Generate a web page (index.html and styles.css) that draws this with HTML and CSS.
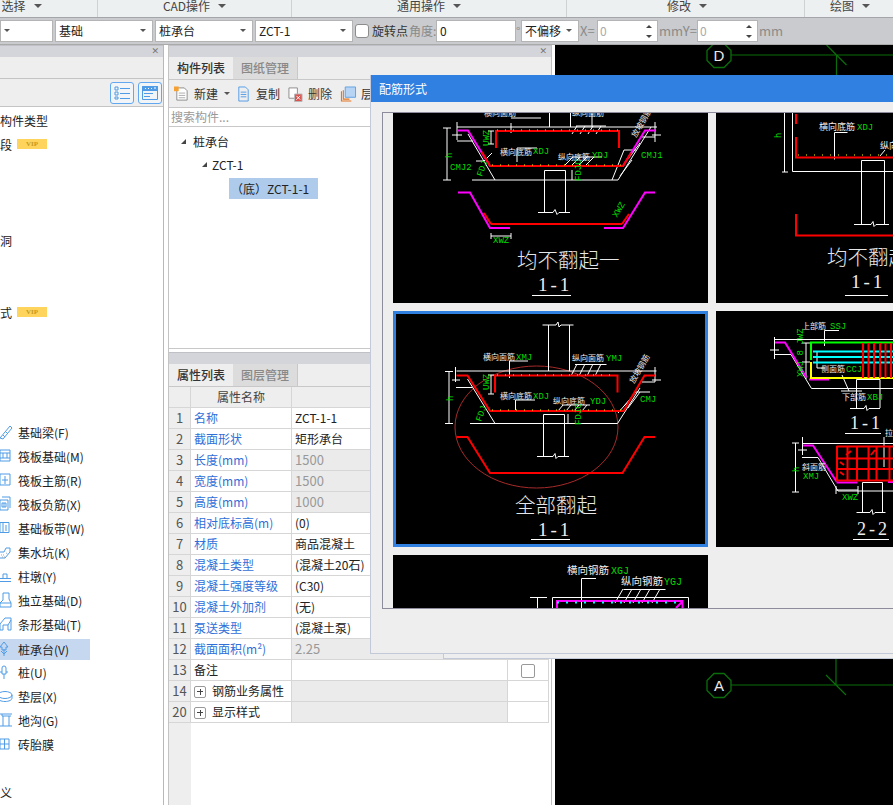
FILE: index.html
```html
<!DOCTYPE html>
<html lang="zh">
<head>
<meta charset="utf-8">
<title>配筋形式</title>
<link rel="stylesheet" href="styles.css">
</head>
<body>
<div class="app">
  <div class="menubar">
    <div class="menu m1"><span>选择</span><i class="caret"></i></div>
    <div class="menu m2"><span>CAD操作</span><i class="caret"></i></div>
    <div class="menu m3"><span>通用操作</span><i class="caret"></i></div>
    <div class="menu m4"><span>修改</span><i class="caret"></i></div>
    <div class="menu m5"><span>绘图</span><i class="caret"></i></div>
  </div>
  <div class="optbar">
    <div class="combo c0"><i class="caret small"></i></div>
    <div class="combo c1"><span>基础</span><i class="caret small"></i></div>
    <div class="combo c1"><span>桩承台</span><i class="caret small"></i></div>
    <div class="combo c1"><span>ZCT-1</span><i class="caret small"></i></div>
    <div class="check"></div>
    <span class="lbl dark">旋转点</span>
    <span class="lbl w-ang">角度:</span>
    <div class="combo c-ang"><span>0</span></div>
    <span class="lbl deg">°</span>
    <div class="combo c-off"><span>不偏移</span><i class="caret small"></i></div>
    <span class="lbl w-x">X=</span>
    <div class="combo c-spin"><span class="mut">0</span><i class="spin"></i></div>
    <span class="lbl w-y">mmY=</span>
    <div class="combo c-spin"><span class="mut">0</span><i class="spin"></i></div>
    <span class="lbl w-mm">mm</span>
  </div>
  <div class="main">
    <aside class="left">
      <div class="strip"><span class="close">✕</span></div>
      <div class="left-tabs"></div>
      <div class="left-tools">
        <div class="tbtn"><svg width="16" height="14" viewBox="0 0 16 14"><path class="ib" d="M1 1h3v3H1zM1 6h3v3H1zM1 11h3v2H1zM6 2.500h10M6 7.500h10M6 12.500h10"/></svg></div>
        <div class="tbtn"><svg width="16" height="14" viewBox="0 0 16 14"><path class="ib" d="M.5.500h15v13H.5zM2 7.500h9M2 10.500h6"/><path class="ibf" d="M.5.500h15v4H.5z"/><path class="iw" d="M3 2.500h1M6 2.500h1M9 2.500h1M12 2h2"/></svg></div>
      </div>
      <div class="comp-list">
        <div class="crow"><span>构件类型</span></div>
        <div class="crow"><span>段</span><b class="vip">VIP</b></div>
        <div class="crow"></div><div class="crow"></div><div class="crow"></div>
        <div class="crow"><span>洞</span></div>
        <div class="crow"></div><div class="crow"></div>
        <div class="crow"><span>式</span><b class="vip">VIP</b></div>
        <div class="crow"></div><div class="crow"></div><div class="crow"></div><div class="crow"></div>
        <div class="crow it"><svg class="ic" viewBox="0 0 14 16"><path class="ib" d="M0 14L10 2l2 2L3 15zM3 11l2 2M6 8l2 2"/></svg><span>基础梁(F)</span></div>
        <div class="crow it"><svg class="ic" viewBox="0 0 14 16"><path class="ib" d="M0 2h10v11H0zM3 5h4v5H3zM0 5h3M7 5h3M0 10h3M7 10h3"/></svg><span>筏板基础(M)</span></div>
        <div class="crow it"><svg class="ic" viewBox="0 0 14 16"><path class="ib" d="M0 2h10v11H0zM5 4v8M2 8h6"/></svg><span>筏板主筋(R)</span></div>
        <div class="crow it"><svg class="ic" viewBox="0 0 14 16"><path class="ib" d="M2 1h8v11M0 4h8v10H0zM2 7h4v4H2zM4 7v4"/></svg><span>筏板负筋(X)</span></div>
        <div class="crow it"><svg class="ic" viewBox="0 0 14 16"><path class="ib" d="M0 2.500h9v10H0zM3 3v9M6 5v6"/></svg><span>基础板带(W)</span></div>
        <div class="crow it"><svg class="ic" viewBox="0 0 14 16"><path class="ib" d="M0 8h4l2-4h4M0 14h5l5-6V4"/><path class="id" d="M1 11h4M2 13h3M6 9l2 1"/></svg><span>集水坑(K)</span></div>
        <div class="crow it"><svg class="ic" viewBox="0 0 14 16"><path class="ib" d="M0 13.500h11M0 10.500h11M3 10V6h4v4"/></svg><span>柱墩(Y)</span></div>
        <div class="crow it"><svg class="ic" viewBox="0 0 14 16"><path class="ib" d="M3 1h6v6M3 1v7L0 11v4h11v-4L9 7M0 11h11"/></svg><span>独立基础(D)</span></div>
        <div class="crow it"><svg class="ic" viewBox="0 0 14 16"><path class="ib" d="M0 8l5-6h6v12H8V9H3v5H0zM8 9l3-5"/></svg><span>条形基础(T)</span></div>
        <div class="crow it sel"><div class="hl"><svg class="ic" viewBox="0 0 14 16"><path class="ib" d="M4 1L0 6h2v3h4V6h2zM4 8v7M1 10l3 3 3-3"/></svg><span>桩承台(V)</span></div></div>
        <div class="crow it"><svg class="ic" viewBox="0 0 14 16"><path class="ib" d="M2 4a2 2 0 0 1 4 0v6H2zM0 8h2M6 8h2M4 10v5"/></svg><span>桩(U)</span></div>
        <div class="crow it"><svg class="ic" viewBox="0 0 14 16"><ellipse class="ib" cx="5" cy="7" rx="7" ry="3.500"/><path class="ib" d="M-2 7v3c0 2 3 3.500 7 3.500s7-1.500 7-3.500V7"/></svg><span>垫层(X)</span></div>
        <div class="crow it"><svg class="ic" viewBox="0 0 14 16"><path class="ib" d="M0 2h12M2 2v2h9M0 14h12M3 4v10M9 4v10"/></svg><span>地沟(G)</span></div>
        <div class="crow it"><svg class="ic" viewBox="0 0 14 16"><path class="ib" d="M0 3h9v10H0zM4.500 3v10M0 8h9"/></svg><span>砖胎膜</span></div>
        <div class="crow"></div>
        <div class="crow"><span>义</span></div>
      </div>
    </aside>
    <section class="mid">
      <div class="strip"><span class="close">✕</span></div>
      <div class="tabs"><div class="tab on">构件列表</div><div class="tab">图纸管理</div></div>
      <div class="tools">
        <svg class="ti" viewBox="0 0 16 16"><path class="pg" d="M3 1.500h8l3 3v10H3z"/><path class="pl" d="M5 7h7M5 9.500h7M5 12h7"/><path class="sp" d="M0 0h5v5H0z"/></svg><span class="tt">新建</span><i class="caret small tc"></i>
        <svg class="ti t2" viewBox="0 0 16 16"><path class="ib" d="M3 .500h7l3 3v12H3zM5 6h6M5 8.500h6M5 11h6"/></svg><span class="tt">复制</span>
        <svg class="ti t3" viewBox="0 0 16 16"><path class="pg" d="M1 1.500h9v11H1z"/><path class="xb" d="M7 8h8v8H7z"/><path class="xl" d="M9 10l4 4M13 10l-4 4"/></svg><span class="tt">删除</span>
        <svg class="ti t4" viewBox="0 0 16 16"><path class="ol" d="M.5 5v10.500H11M2.500 4v9.500H9"/><path class="bx" d="M4.500.500h11v11h-11z"/></svg><span class="tt">层间复制</span>
      </div>
      <div class="search">搜索构件...</div>
      <div class="tree">
        <div class="node n1"><i class="tri"></i><span>桩承台</span></div>
        <div class="node n2"><i class="tri"></i><span>ZCT-1</span></div>
        <div class="node n3"><span class="nsel">（底）ZCT-1-1</span></div>
      </div>
      <div class="sep"></div>
      <div class="strip"><span class="close"></span></div>
      <div class="tabs"><div class="tab on">属性列表</div><div class="tab">图层管理</div></div>
      <div class="table">
        <div class="c h n"></div><div class="c h ctr">属性名称</div><div class="c h span2"></div>
        <div class="c n">1</div><div class="c k">名称</div><div class="c span2">ZCT-1-1</div>
        <div class="c n">2</div><div class="c k">截面形状</div><div class="c span2">矩形承台</div>
        <div class="c n">3</div><div class="c k">长度(mm)</div><div class="c span2 ro">1500</div>
        <div class="c n">4</div><div class="c k">宽度(mm)</div><div class="c span2 ro">1500</div>
        <div class="c n">5</div><div class="c k">高度(mm)</div><div class="c span2 ro">1000</div>
        <div class="c n">6</div><div class="c k">相对底标高(m)</div><div class="c span2">(0)</div>
        <div class="c n">7</div><div class="c k">材质</div><div class="c span2">商品混凝土</div>
        <div class="c n">8</div><div class="c k">混凝土类型</div><div class="c span2">(混凝土20石)</div>
        <div class="c n">9</div><div class="c k">混凝土强度等级</div><div class="c span2">(C30)</div>
        <div class="c n">10</div><div class="c k">混凝土外加剂</div><div class="c span2">(无)</div>
        <div class="c n">11</div><div class="c k">泵送类型</div><div class="c span2">(混凝土泵)</div>
        <div class="c n">12</div><div class="c k">截面面积(m²)</div><div class="c span2 ro">2.25</div>
        <div class="c n">13</div><div class="c lab">备注</div><div class="c"></div><div class="c ctr"><i class="cb"></i></div>
        <div class="c n">14</div><div class="c lab"><i class="plus"></i>钢筋业务属性</div><div class="c gr"></div><div class="c"></div>
        <div class="c n">20</div><div class="c lab"><i class="plus"></i>显示样式</div><div class="c gr"></div><div class="c"></div>
      </div>
      <div class="filler"></div>
    </section>
    <div class="cad">
      <svg class="cadsvg" viewBox="555 45 338 760">
        <path class="gl" d="M731 55H893M826.500 45l20 20M836.500 55V110M731 685H893M826 675l20 20M836 640V685"/>
        <path class="gl2" d="M714 43.500h10l7 7v10l-7 7h-10l-7-7v-10zM714 673.500h10l7 7v10l-7 7h-10l-7-7v-10z"/>
        <text class="axis" x="719" y="60.500">D</text>
        <text class="axis" x="719" y="690.500">A</text>
      </svg>
    </div>
  </div>

  <div class="backdlg"></div>
  <div class="dialog">
    <div class="dtitle">配筋形式</div>
    <div class="dbody">
      <div class="gallery">
        <div class="card h1">
          <svg class="dw" viewBox="393 113 315 190">
            <path class="w" d="M457 127H657M549.500 113v14M570.500 113v14M447 128v52M443 128h8M443 180h8M457 122v18M452 135h10M457 141h16M468 134l27 46M472 180H618M618 180l33-53M655 122v20M652 135h9M642 137h13M544.500 213V170.500H565.500V213M538 212.500H553l2-3 2 5 2-2H570M511 123v10M511 118h30M592 114v13M491 131v13M488 131h6M488 144h6M476 161h8l8-8M517 148v14M517 148h20M572 170v10"/>
            <path class="w" d="M572 157h30M565 165l8-8M572 165l8-8M579 165l8-8M586 165l8-8M576 126h30M572 134l5-8M580 134l5-8M588 134l5-8M596 134l5-8M636 150h-12l-12 30M632 160l-12 16M640 143l-12 16"/>
            <path class="m" d="M458 130.500H468L490 166H510M604 166H623L645 130.500H655M458 192.500H470L490 228H510M604 228H623L645 192.500H655"/>
            <path class="r" d="M496 148V131H619V148M490 166H623M482 152l8 14M623 166l8-13M491 224H622M484 213l7 11M622 224l7-10"/>
            <path class="y" d="M497 130H618M492 165H622"/>
            <path class="w" d="M491 233v6M511 233v6M491 236h20"/>
            <text class="t" x="500" y="155">横向底筋</text><text class="g" x="533" y="154">XDJ</text>
            <text class="t" x="484" y="116">横向面筋</text><text class="t" x="572" y="116">纵向面筋</text><text class="t" x="558" y="160">纵向底筋</text><text class="g" x="592" y="158">YDJ</text>
            <text class="g" x="450" y="170">CMJ2</text><text class="g" x="641" y="158">CMJ1</text><text class="g" x="493" y="243">XWZ</text>
            <text class="g" transform="translate(452 158) rotate(-90)">h</text>
            <text class="g" transform="translate(489 146) rotate(-90)">UWZ</text>
            <text class="g" transform="translate(482 177) rotate(-70)">FDJ</text>
            <text class="g" transform="translate(581 181) rotate(-90)">FDJC</text>
            <text class="g" transform="translate(617 218) rotate(-60)">XWZ</text>
            <text class="t" transform="translate(636 138) rotate(-60)">放坡钢筋</text>
            <text class="big" x="517" y="268">均不翻起一</text>
            <text class="num" x="538" y="291">1-1</text>
            <path class="w" d="M532 295.500H571"/>
          </svg>
        </div>
        <div class="card h1">
          <svg class="dw" viewBox="716 113 315 190">
            <path class="w" d="M784.500 113v59M782 172h6M792.500 113v58.500H893M861.500 224V160.500H884.500V224M854 224.500H871l2-3 1 5 2-2H889M834.500 159.500V132.500H847.500M880 156l5-6"/>
            <path class="r" d="M796 114v10M796 137V157.500H893M796 214V235.500H893"/>
            <path class="y" d="M798 155H893"/>
            <text class="t t9" x="819" y="130">横向底筋</text><text class="g" x="857" y="130">XDJ</text><text class="t t9" x="880" y="149">纵向底筋</text>
            <text class="g" transform="translate(781 138) rotate(-90)">h</text>
            <text class="big" x="827" y="265">均不翻起一</text>
            <text class="num" x="851" y="288">1-1</text>
            <path class="w" d="M845 295.500H888"/>
          </svg>
        </div>
        <div class="card h2 selc">
          <svg class="dw" viewBox="393 311 315 236">
            <ellipse class="el" cx="536.500" cy="427" rx="81.500" ry="61"/>
            <path class="w" d="M548.500 371V325M569.500 371V325M542.500 325H556l2-3 1 5 2-2H573.500M456.500 371H656.500M455.500 367v15M452 380h8M449 371.500v52M445 371.500h8M445 423.500h8M456 387.500h16.500M467.500 379L495 423.500M470 423.500H617.500M617.500 423.500L640 388M491 375v19M488 375h6M488 394h6M543.500 456V414.500H564.500V456M537 456.500H553l2-3 1 5 2-2H569M509.500 361v17M509.500 361H528M515.500 400v12M515.500 400H535M655 367v15M652 380h9M642 382h13M568 414v9"/>
            <path class="w" d="M575 364.500H606.500M571 376l6-12M579 376l6-12M587 376l6-12M595 376l6-12M562 405h28M558 411l5-6M566 411l5-6M574 411l5-6M582 411l5-6M650 392h-14l-18 21M640 392l-12 16M632 398l-8 8"/>
            <path class="r" d="M456.500 375.500H467.500L490 411H623.500L644.500 375.500H655M495 392.500V375.500H617.500V392.500M456.500 437H467.500L490 473H622.500L644.500 437H655"/>
            <path class="y" d="M497 375H617M492 410H622"/>
            <text class="t" x="483" y="360">横向面筋</text><text class="g" x="516" y="360">XMJ</text>
            <text class="t" x="572" y="361">纵向面筋</text><text class="g" x="606" y="361">YMJ</text>
            <text class="t" x="500" y="399">横向底筋</text><text class="g" x="533" y="399">XDJ</text>
            <text class="t" x="553" y="404">纵向底筋</text><text class="g" x="590" y="404">YDJ</text>
            <text class="g" x="640" y="402">CMJ</text>
            <text class="g" transform="translate(453 401) rotate(-90)">h</text>
            <text class="g" transform="translate(489 390) rotate(-90)">UWZ</text>
            <text class="g" transform="translate(481 422) rotate(-70)">FDJ</text>
            <text class="g" transform="translate(581 425) rotate(-90)">FDJC</text>
            <text class="t" transform="translate(634 384) rotate(-60)">放坡钢筋</text>
            <text class="big" x="515" y="513">全部翻起</text>
            <text class="num" x="538" y="536">1-1</text>
            <path class="w" d="M531 539.500H570"/>
          </svg>
        </div>
        <div class="card h2">
          <svg class="dw" viewBox="716 311 315 236">
            <path class="w" d="M774.500 337v22M770 350h9M774.500 339.500H893M774 354.500h17M791 354.500L811.500 388.500H893M806 343v36M802 343h8M802 362h8M824.500 346V330.500H839M856.500 408V379.500H880V408M850 408.500H864l2-3 1 5 2-2H880M842 375l7 16M841 391h21M817 352v16M817 368h8"/>
            <path class="m" d="M775 342.500H785L806.500 377.500M809 379.500H829"/>
            <path class="bg" d="M811 360V342.500H893"/>
            <path class="yl" d="M811 362V378H893"/>
            <path class="cy" d="M813 351.500H893M813 357H893M813 362.500H893"/>
            <path class="r" d="M863 343v35M868.500 343v35M874 343v35M880 343v35M885.500 343v35M891 343v35"/>
            <text class="t" x="802" y="329">上部筋</text><text class="g" x="830" y="329">SSJ</text>
            <text class="t" x="821" y="372">侧面筋</text><text class="g" x="846" y="372">CCJ</text>
            <text class="t" x="842" y="400">下部筋</text><text class="g" x="867" y="400">XBJ</text>
            <text class="g" transform="translate(803 377) rotate(-90)">XWJ 8 JWZ</text>
            <text class="num sm" x="850" y="429">1-1</text>
            <path class="w" d="M845 433.500H881"/>
            <path class="w" d="M795.500 443v49M792 443h7M792 492h7M802.500 437v18M798 450h9M802 443.500H893M802 457.500h16M818 457.500L838 491H893M836 486v8M858 486v8M836 490h22M862.500 512V482.500H882.500V512M856.500 512.500H870l2-3 1 5 2-2H885.500M884 437v30"/>
            <path class="m" d="M803 445.500H813L836.500 481.500M836.500 482.500H857.500M888 482h5"/>
            <path class="r" d="M836.500 446.500H893M836.500 458.500H893M836.500 469H893M836.500 480.500H893M837 446v35M847.500 446v35M857 446v35M868.500 446v35M876.500 446v35M889.500 446v35M851 451l-5 4M875 450l-4 5M840 462l4 3M840 472l4 3"/>
            <text class="t" x="802" y="470">斜面筋</text><text class="g" x="803" y="479">XMJ</text>
            <text class="g" x="842" y="500">XWZ</text><text class="t" x="885" y="436">拉筋</text>
            <text class="g" transform="translate(799 472) rotate(-90)">h</text>
            <text class="num sm" x="857" y="535">2-2</text>
            <path class="w" d="M853 539.500H889"/>
          </svg>
        </div>
        <div class="card h3">
          <svg class="dw" viewBox="393 555 315 53">
            <path class="w" d="M530 597.500H547M537.500 597v11M552.500 608V597.500H688.500V608M581.500 608V578.500H596M623.500 589.500H665.500M615 603l8-14M624 603l8-14M633 603l8-14M642 603l8-14M652 603l8-14"/>
            <path class="m" d="M557 608V601H682.500V608M676 608l6-6"/>
            <path class="cd" d="M557 602.500H682"/>
            <text class="t t10" x="567" y="574">横向钢筋</text><text class="g g10" x="611" y="574">XGJ</text>
            <text class="t t10" x="621" y="585">纵向钢筋</text><text class="g g10" x="664" y="585">YGJ</text>
          </svg>
        </div>
      </div>
    </div>
  </div>
</div>
</body>
</html>
```

FILE: styles.css
```css
* { box-sizing: border-box; }
html, body { margin: 0; padding: 0; background: #fff; }
body { font-family: "Noto Sans CJK SC", "Liberation Sans", sans-serif; font-size: 12px; color: #222; }
.app { position: relative; width: 893px; height: 805px; overflow: hidden; display: flex; flex-direction: column; }

.menubar { height: 18px; flex: none; display: flex; background: #edf0f0; border-bottom: 1px solid #a3a5a8; overflow: hidden; }
.menu { height: 17px; display: flex; align-items: center; justify-content: center; gap: 8px; border-right: 1px solid #cfd2d2; color: #444; font-size: 12px; line-height: 10px; }
.menu span { position: relative; top: -3px; }
.menu .caret { position: relative; top: -3px; }
.m1 { width: 98px; padding-right: 54px; }
.m2 { width: 194px; }
.m3 { width: 275px; }
.m4 { width: 238px; padding-left: 3px; }
.m5 { width: 88px; padding-left: 2px; border-right: 0; }
.caret { display: block; width: 0; height: 0; border-left: 4px solid transparent; border-right: 4px solid transparent; border-top: 4px solid #555; flex: none; }
.caret.small { border-left-width: 3px; border-right-width: 3px; border-top-width: 3px; }

.optbar { height: 27px; flex: none; background: #c9cbce; border-bottom: 1px solid #aaa; display: flex; align-items: center; padding-bottom: 3px; padding-top: 2px; }
.combo { height: 22px; background: #fff; border: 1px solid #b4b4b4; display: flex; align-items: center; justify-content: space-between; padding: 0 6px 0 3px; margin-right: 2px; font-size: 12px; color: #222; flex: none; }
.c0 { width: 53px; }
.c1 { width: 98px; }
.c-ang { width: 80px; margin-right: 0; }
.c-off { width: 58px; margin-right: 0; }
.c-spin { width: 61px; margin-right: 0; padding-left: 2px; padding-right: 5px; }
.mut { color: #aaa; }
.spin { display: block; width: 0; height: 14px; position: relative; margin-right: 3px; }
.spin::before, .spin::after { content: ""; position: absolute; left: -3px; border-left: 3px solid transparent; border-right: 3px solid transparent; }
.spin::before { top: 1px; border-bottom: 3px solid #444; }
.spin::after { bottom: 0; border-top: 3px solid #444; }
.check { width: 14px; height: 14px; margin-right: 3px; background: #fff; border: 1px solid #8c8c8c; border-radius: 3px; flex: none; }
.lbl { color: #8a8a8a; font-size: 12px; flex: none; white-space: nowrap; }
.dark { color: #333; width: 37px; }
.w-ang { width: 27px; }
.deg { width: 5px; }
.w-x { width: 18px; padding-left: 1px; font-size: 13px; }
.w-y { width: 39px; padding-left: 1px; font-size: 13px; }
.w-mm { margin-left: 1px; font-size: 13px; }

.main { flex: 1; display: flex; min-height: 0; }
.strip { height: 12px; flex: none; background: #d3d5da; border-top: 1px solid #bfc1c6; position: relative; }
.close { position: absolute; right: 4px; top: -1px; font-size: 9px; line-height: 12px; color: #777; font-family: "DejaVu Sans", sans-serif; font-weight: bold; }

.left { width: 164px; flex: none; border-right: 1px solid #b8b8b8; margin-right: 4px; display: flex; flex-direction: column; }
.left-tabs { height: 22px; flex: none; background: #eee; border-bottom: 1px solid #c4c4c4; }
.left-tools { height: 28px; flex: none; background: #eee; border-bottom: 1px solid #c4c4c4; display: flex; justify-content: flex-end; gap: 4px; padding: 3px 1px 0 0; }
.tbtn { width: 24px; height: 22px; border: 1px solid #62a8f0; border-radius: 3px; background: #f2f5f8; display: flex; align-items: center; justify-content: center; }
.ib { fill: none; stroke: #4f9be6; stroke-width: 1; }
.ibf { fill: #4f9be6; stroke: #4f9be6; }
.iw { fill: none; stroke: #fff; stroke-width: 1; }
.id { fill: none; stroke: #9ab; stroke-width: 1; stroke-dasharray: 1 1; }
.comp-list { flex: 1; padding-top: 1px; }
.crow { height: 24px; display: flex; align-items: center; white-space: nowrap; color: #222; }
.vip { margin-left: 5px; width: 30px; height: 10px; background: #ffd45c; color: #c49a20; font: bold 7px/10px "Liberation Serif", serif; text-align: center; }
.it { padding-left: 18px; position: relative; }
.ic { position: absolute; left: 0; top: 4px; width: 14px; height: 16px; overflow: visible; }
.sel { padding-left: 0; }
.hl { width: 90px; height: 21px; background: #c6d8f0; padding-left: 18px; display: flex; align-items: center; position: relative; top: 1px; }
.hl .ic { top: 2px; }

.mid { width: 384px; flex: none; border-left: 1px solid #c4c4c4; border-right: 1px solid #c0c0c0; display: flex; flex-direction: column; margin-right: 3px; }
.tabs { height: 23px; flex: none; display: flex; background: #eee; border-bottom: 1px solid #c8c8c8; }
.tab { width: 65px; height: 22px; line-height: 22px; text-align: center; color: #888; background: #dcdcdc; border-right: 1px solid #c8c8c8; font-weight: 500; }
.tab.on { width: 64px; background: #eee; color: #333; border-right: 0; }
.tools { height: 28px; flex: none; background: #eee; border-bottom: 1px solid #c8c8c8; display: flex; align-items: center; padding-left: 5px; white-space: nowrap; overflow: hidden; }
.ti { width: 15px; height: 16px; flex: none; overflow: visible; }
.tt { margin-left: 5px; color: #333; }
.tc { margin-left: 6px; }
.t2 { margin-left: 6px; }
.t3 { margin-left: 8px; }
.t4 { margin-left: 9px; }
.pg { fill: #fff; stroke: #8a8a8a; }
.pl { stroke: #aaa; fill: none; }
.sp { fill: #f5a030; }
.xb { fill: #d9534f; stroke: #b8b8b8; }
.xl { stroke: #fff; fill: none; }
.ol { fill: none; stroke: #e8741f; stroke-width: 1.2; }
.bx { fill: #b8d4f4; stroke: #5f9fe0; }
.search { height: 19px; flex: none; background: #fff; border-bottom: 1px solid #c8c8c8; color: #999; font-size: 12px; line-height: 17px; padding-left: 2px; }
.tree { height: 222px; flex: none; padding-top: 2px; border-bottom: 1px solid #c8c8c8; }
.node { height: 24px; display: flex; align-items: center; color: #222; }
.n2 { padding-left: 33px; margin-top: -1px; }
.n3 { padding-left: 60px; }
.tri { display: block; width: 0; height: 0; border-left: 5px solid transparent; border-bottom: 5px solid #444; margin-right: 5px; }
.n1 { padding-left: 12px; }
.n1 .tri { margin-right: 7px; }
.nsel { display: block; width: 89px; height: 21px; line-height: 21px; background: #aecbeb; white-space: nowrap; padding-left: 2px; }
.sep { height: 3px; flex: none; background: #fff; }

.table { display: grid; grid-template-columns: 22px 101px 216px 41px; grid-auto-rows: 21px; flex: none; width: 380px; }
.c { border-right: 1px solid #d6d6d6; border-bottom: 1px solid #d6d6d6; padding-left: 4px; line-height: 20px; white-space: nowrap; color: #222; background: #fff; }
.h { background: #eee; color: #444; }
.n { background: #eee; color: #555; text-align: center; padding-left: 0; font-size: 13px; }
.span2 { grid-column: span 2; padding-left: 3px; }
.ctr { text-align: center; padding-left: 0; }
.k { color: #2f6fd8; padding-left: 3px; }
.lab { padding-left: 3px; }
.ro { background: #ebebeb; color: #999; font-size: 13px; }
.gr { background: #ebebeb; }
.cb { display: inline-block; width: 14px; height: 14px; border: 1px solid #999; border-radius: 2px; vertical-align: middle; margin-top: -2px; }
.plus { display: inline-block; width: 12px; height: 12px; margin-right: 6px; border: 1px solid #999; border-radius: 2px; vertical-align: middle; margin-top: -2px; background: linear-gradient(#444, #444) center / 6px 1px no-repeat, linear-gradient(#444, #444) center / 1px 6px no-repeat; }
.filler { flex: 1; width: 22px; background: #eee; }

.cad { flex: 1; background: #000; position: relative; min-width: 0; }
.cadsvg { display: block; width: 338px; height: 760px; }
.gl { fill: none; stroke: #0a6e0a; stroke-width: 1.2; }
.gl2 { fill: none; stroke: #0a6e0a; stroke-width: 1.3; }
.axis { fill: #e8e8e8; font: 15px "Liberation Sans", sans-serif; text-anchor: middle; }

.backdlg { position: absolute; left: 443px; top: 640px; width: 450px; height: 19px; background: #eee; border-bottom: 1px solid #c3c9d8; border-left: 1px solid #c3c9d8; }
.dialog { position: absolute; left: 370px; top: 75px; width: 540px; height: 579px; background: #eee; border-left: 1px solid #c3c9d8; border-bottom: 1px solid #c3c9d8; display: flex; flex-direction: column; }
.dtitle { height: 27px; flex: none; background: #2f80e0; color: #fff; line-height: 27px; padding-left: 8px; font-size: 12px; }
.dbody { flex: 1; padding: 10px 0 0 11px; }
.gallery { height: 497px; background: #eee; border-top: 1px solid #8c8c9c; border-left: 1px solid #8c8c9c; border-bottom: 1px solid #8c8c9c; padding-left: 10px; overflow: hidden; display: grid; grid-template-columns: 315px 315px; grid-template-rows: 190px 236px 53px; gap: 8px; }
.card { background: #000; overflow: hidden; }
.selc { position: relative; }
.selc::after { content: ""; position: absolute; inset: 0; border: 3px solid #2f80e0; }
.dw { display: block; width: 315px; height: 100%; }
.w { fill: none; stroke: #fff; stroke-width: 1; }
.r { fill: none; stroke: #f00; stroke-width: 2; }
.m { fill: none; stroke: #f0f; stroke-width: 2; }
.bg { fill: none; stroke: #0f0; stroke-width: 2; }
.yl { fill: none; stroke: #ff0; stroke-width: 2; }
.cy { fill: none; stroke: #0ff; stroke-width: 2; }
.y { fill: none; stroke: #ff0; stroke-width: 1; stroke-dasharray: 1 7; }
.cd { fill: none; stroke: #0ff; stroke-width: 2; stroke-dasharray: 2 7; }
.el { fill: none; stroke: #a82a2a; stroke-width: 1; }
.t { fill: #eee; font-size: 8px; }
.t9 { font-size: 9px; }
.t10 { font-size: 10.500px; }
.g { fill: #0d0; font: 9px "Liberation Mono", monospace; }
.g10 { font-size: 10px; }
.big { fill: #e6e6e6; font-size: 20.500px; font-weight: 300; }
.num { fill: #eee; font: 19px "Liberation Serif", serif; letter-spacing: 3px; }
.num.sm { font-size: 18px; }
```
